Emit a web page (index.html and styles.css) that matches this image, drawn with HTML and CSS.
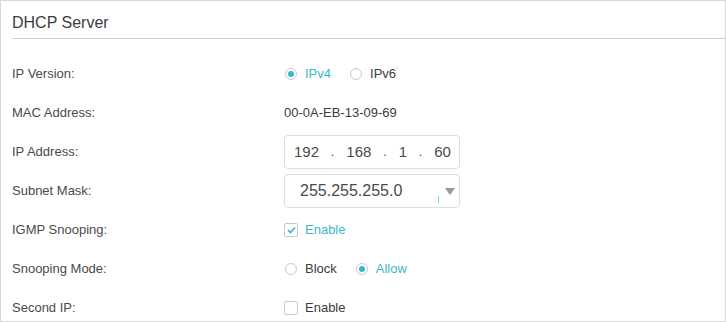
FILE: index.html
```html
<!DOCTYPE html>
<html lang="en">
<head>
    <meta charset="UTF-8">
    <title>DHCP Server</title>
    <link rel="stylesheet" href="styles.css">
</head>
<body>
    <div class="panel">
        <h2 class="panel-title">DHCP Server</h2>
        <div class="form">
            <div class="row">
                <span class="label">IP Version:</span>
                <div class="control">
                    <span class="radio checked"></span><span class="opt active">IPv4</span>
                    <span class="radio"></span><span class="opt">IPv6</span>
                </div>
            </div>
            <div class="row">
                <span class="label">MAC Address:</span>
                <div class="control"><span class="value">00-0A-EB-13-09-69</span></div>
            </div>
            <div class="row">
                <span class="label">IP Address:</span>
                <div class="control">
                    <div class="ip-box">
                        <span class="oct">192</span><span class="dot">.</span>
                        <span class="oct">168</span><span class="dot">.</span>
                        <span class="oct">1</span><span class="dot">.</span>
                        <span class="oct">60</span>
                    </div>
                </div>
            </div>
            <div class="row">
                <span class="label">Subnet Mask:</span>
                <div class="control">
                    <div class="select-box">
                        <span class="select-text">255.255.255.0</span>
                        <span class="caret-line"></span>
                        <span class="arrow"></span>
                    </div>
                </div>
            </div>
            <div class="row">
                <span class="label">IGMP Snooping:</span>
                <div class="control">
                    <span class="check checked">
                        <svg width="9" height="8" viewBox="0 0 9 8"><path d="M1 4.2 L3.5 6.5 L8 1.5" fill="none" stroke="#3cb8c8" stroke-width="1.8"/></svg>
                    </span><span class="opt active">Enable</span>
                </div>
            </div>
            <div class="row">
                <span class="label">Snooping Mode:</span>
                <div class="control">
                    <span class="radio"></span><span class="opt">Block</span>
                    <span class="radio checked"></span><span class="opt active">Allow</span>
                </div>
            </div>
            <div class="row">
                <span class="label">Second IP:</span>
                <div class="control">
                    <span class="check"></span><span class="opt">Enable</span>
                </div>
            </div>
        </div>
    </div>
</body>
</html>
```

FILE: styles.css
```css
body {
    margin: 0;
    font-family: "Liberation Sans", Arial, sans-serif;
    background: #fff;
}
.panel {
    width: 726px;
    height: 322px;
    box-sizing: border-box;
    border: 1px solid #d8d8d8;
    padding: 0 0 0 11px;
    overflow: hidden;
}
.panel-title {
    margin: 0;
    height: 38px;
    box-sizing: border-box;
    padding-top: 13px;
    font-size: 16px;
    font-weight: normal;
    color: #3c3c3c;
    border-bottom: 1px solid #cfcfcf;
}
.form {
    padding-top: 15px;
}
.row {
    display: flex;
    align-items: center;
    height: 39px;
}
.label {
    width: 272px;
    font-size: 13px;
    color: #4a4a4a;
}
.control {
    display: flex;
    align-items: center;
    font-size: 13px;
    color: #3c3c3c;
}
.value {
    color: #3c3c3c;
}
.radio {
    width: 10px;
    height: 10px;
    border: 1px solid #c9c9c9;
    border-radius: 50%;
    position: relative;
    margin: 0 8px 0 1px;
}
.radio.checked::after {
    content: "";
    position: absolute;
    left: 2px;
    top: 2px;
    width: 6px;
    height: 6px;
    border-radius: 50%;
    background: #3cb8c8;
}
.opt {
    margin-right: 18px;
}
.opt.active {
    color: #3cb8c8;
}
.check {
    width: 12px;
    height: 12px;
    border: 1px solid #c9c9c9;
    border-radius: 2px;
    margin-right: 7px;
    display: flex;
    align-items: center;
    justify-content: center;
}
.ip-box, .select-box {
    width: 176px;
    height: 34px;
    box-sizing: border-box;
    border: 1px solid #dedede;
    border-radius: 4px;
    display: flex;
    align-items: center;
    font-size: 15px;
    color: #4a4a4a;
}
.ip-box {
    padding: 0 8px 0 9px;
    justify-content: space-between;
}
.dot {
    font-size: 13px;
}
.select-box {
    position: relative;
    padding-left: 15px;
    font-size: 16px;
}
.caret-line {
    position: absolute;
    left: 153px;
    top: 21px;
    width: 1px;
    height: 7px;
    background: #7fd3dd;
}
.arrow {
    position: absolute;
    right: 4px;
    top: 13px;
    border-left: 5px solid transparent;
    border-right: 5px solid transparent;
    border-top: 7px solid #999;
}
```
